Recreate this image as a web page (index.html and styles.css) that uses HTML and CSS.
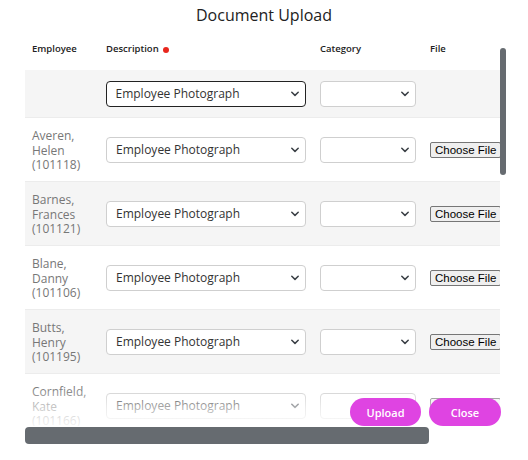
FILE: index.html
```html
<!DOCTYPE html>
<html lang="en">
<head>
<meta charset="utf-8">
<title>Document Upload</title>
<link rel="stylesheet" href="styles.css">
</head>
<body>
<div class="dialog">
  <h1 class="title">Document Upload</h1>
  <div class="table-wrap">
    <div class="table">
      <div class="row head">
        <div class="cell">Employee</div>
        <div class="cell">Description <span class="req"></span></div>
        <div class="cell">Category</div>
        <div class="cell">File</div>
      </div>
      <div class="row first alt">
        <div class="cell"></div>
        <div class="cell"><div class="select desc focus"><span>Employee Photograph</span><svg class="chev" viewBox="0 0 10 6" width="10" height="6"><path d="M1.8 1.3 L5 4.4 L8.2 1.3"/></svg></div></div>
        <div class="cell"><div class="select cat"><span></span><svg class="chev" viewBox="0 0 10 6" width="10" height="6"><path d="M1.8 1.3 L5 4.4 L8.2 1.3"/></svg></div></div>
        <div class="cell"></div>
      </div>
      <div class="row">
        <div class="cell name">Averen,<br>Helen<br>(101118)</div>
        <div class="cell"><div class="select desc"><span>Employee Photograph</span><svg class="chev" viewBox="0 0 10 6" width="10" height="6"><path d="M1.8 1.3 L5 4.4 L8.2 1.3"/></svg></div></div>
        <div class="cell"><div class="select cat"><span></span><svg class="chev" viewBox="0 0 10 6" width="10" height="6"><path d="M1.8 1.3 L5 4.4 L8.2 1.3"/></svg></div></div>
        <div class="cell file"><span class="file-btn">Choose File</span><span class="file-edge"></span></div>
      </div>
      <div class="row alt">
        <div class="cell name">Barnes,<br>Frances<br>(101121)</div>
        <div class="cell"><div class="select desc"><span>Employee Photograph</span><svg class="chev" viewBox="0 0 10 6" width="10" height="6"><path d="M1.8 1.3 L5 4.4 L8.2 1.3"/></svg></div></div>
        <div class="cell"><div class="select cat"><span></span><svg class="chev" viewBox="0 0 10 6" width="10" height="6"><path d="M1.8 1.3 L5 4.4 L8.2 1.3"/></svg></div></div>
        <div class="cell file"><span class="file-btn">Choose File</span><span class="file-edge"></span></div>
      </div>
      <div class="row">
        <div class="cell name">Blane,<br>Danny<br>(101106)</div>
        <div class="cell"><div class="select desc"><span>Employee Photograph</span><svg class="chev" viewBox="0 0 10 6" width="10" height="6"><path d="M1.8 1.3 L5 4.4 L8.2 1.3"/></svg></div></div>
        <div class="cell"><div class="select cat"><span></span><svg class="chev" viewBox="0 0 10 6" width="10" height="6"><path d="M1.8 1.3 L5 4.4 L8.2 1.3"/></svg></div></div>
        <div class="cell file"><span class="file-btn">Choose File</span><span class="file-edge"></span></div>
      </div>
      <div class="row alt">
        <div class="cell name">Butts,<br>Henry<br>(101195)</div>
        <div class="cell"><div class="select desc"><span>Employee Photograph</span><svg class="chev" viewBox="0 0 10 6" width="10" height="6"><path d="M1.8 1.3 L5 4.4 L8.2 1.3"/></svg></div></div>
        <div class="cell"><div class="select cat"><span></span><svg class="chev" viewBox="0 0 10 6" width="10" height="6"><path d="M1.8 1.3 L5 4.4 L8.2 1.3"/></svg></div></div>
        <div class="cell file"><span class="file-btn">Choose File</span><span class="file-edge"></span></div>
      </div>
      <div class="row">
        <div class="cell name">Cornfield,<br>Kate<br>(101166)</div>
        <div class="cell"><div class="select desc"><span>Employee Photograph</span><svg class="chev" viewBox="0 0 10 6" width="10" height="6"><path d="M1.8 1.3 L5 4.4 L8.2 1.3"/></svg></div></div>
        <div class="cell"><div class="select cat"><span></span><svg class="chev" viewBox="0 0 10 6" width="10" height="6"><path d="M1.8 1.3 L5 4.4 L8.2 1.3"/></svg></div></div>
        <div class="cell file"><span class="file-btn">Choose File</span><span class="file-edge"></span></div>
      </div>
    </div>
    <div class="fade"></div>
  </div>
  <div class="vscroll"></div>
  <div class="hscroll"><div class="hthumb"></div></div>
  <div class="actions">
    <button class="btn">Upload</button>
    <button class="btn">Close</button>
  </div>
</div>
</body>
</html>
```
FILE: styles.css
```css
html, body {
  margin: 0;
  padding: 0;
  background: #ffffff;
}
body {
  font-family: "Open Sans", "Noto Sans", sans-serif;
  color: #222;
}
.dialog {
  position: relative;
  box-sizing: border-box;
  width: 528px;
  height: 460px;
  padding-top: 3px;
}
.title {
  margin: 0;
  font-size: 16px;
  line-height: 24px;
  font-weight: 400;
  text-align: center;
  color: #222;
}
.table-wrap {
  position: relative;
  margin-left: 25px;
  width: 475px;
  height: 399px;
  overflow: hidden;
}
.table {
  width: 580px;
}
.row {
  display: grid;
  grid-template-columns: 74px 214px 110px 1fr;
  align-items: center;
  height: 63px;
  border-bottom: 1px solid #ececec;
}
.row.alt {
  background: #f5f5f5;
}
.row.head {
  height: 43px;
  align-items: start;
  border-bottom: none;
}
.row.first {
  height: 47px;
}
.cell {
  padding: 0 7px;
  display: flex;
  align-items: center;
  min-width: 0;
}
.head .cell {
  padding-top: 15px;
  font-size: 9.5px;
  line-height: 14px;
  font-weight: 600;
  color: #222;
}
.req {
  display: inline-block;
  width: 6px;
  height: 6px;
  margin-left: 4px;
  margin-top: 1px;
  border-radius: 50%;
  background: #e8261d;
}
.name {
  display: block;
  font-size: 12px;
  line-height: 14.5px;
  color: #777;
  margin-top: 3px;
}
.select {
  box-sizing: border-box;
  height: 26px;
  display: flex;
  align-items: center;
  justify-content: space-between;
  border: 1px solid #cfcfcf;
  border-radius: 4px;
  background: #fff;
  padding: 0 5px 0 9px;
  font-size: 12px;
  color: #333;
}
.select.focus {
  border: 1.5px solid #222;
  padding-left: 8.5px;
}
.select.desc {
  width: 200px;
}
.select.cat {
  width: 96px;
}
.chev {
  fill: none;
  stroke: #3a3f45;
  stroke-width: 1.5;
  stroke-linecap: round;
  stroke-linejoin: round;
}
.file {
  white-space: nowrap;
  font-family: "Liberation Sans", Arial, sans-serif;
  font-size: 11.5px;
}
.file-btn {
  display: inline-block;
  box-sizing: border-box;
  height: 16px;
  line-height: 14px;
  padding: 0 4px;
  border: 1px solid #767676;
  border-radius: 2px;
  background: #efefef;
  color: #000;
}
.file-edge {
  display: inline-block;
  width: 20px;
  height: 16px;
  margin-left: 2px;
  border-left: 1px solid #c8c8c8;
}
.fade {
  position: absolute;
  left: 0;
  right: 0;
  bottom: 0;
  height: 40px;
  background: linear-gradient(rgba(255,255,255,0) 0%, rgba(255,255,255,0.6) 55%, rgba(255,255,255,0.92) 100%);
  pointer-events: none;
}
.vscroll {
  position: absolute;
  left: 500px;
  top: 48px;
  width: 6px;
  height: 127px;
  border-radius: 3px;
  background: #666b70;
}
.hscroll {
  margin-left: 25px;
  width: 475px;
  height: 17px;
  margin-top: 1px;
}
.hthumb {
  width: 404px;
  height: 17px;
  border-radius: 4px;
  background: #666b70;
}
.actions {
  position: absolute;
  right: 27px;
  top: 398px;
  display: flex;
  gap: 8px;
}
.btn {
  width: 71px;
  height: 28px;
  border: none;
  border-radius: 14px;
  background: #df44e2;
  color: #fff;
  font-family: "Open Sans", "Noto Sans", sans-serif;
  font-size: 11px;
  font-weight: 600;
  padding: 0;
}
.btn + .btn {
  width: 72px;
}
```
